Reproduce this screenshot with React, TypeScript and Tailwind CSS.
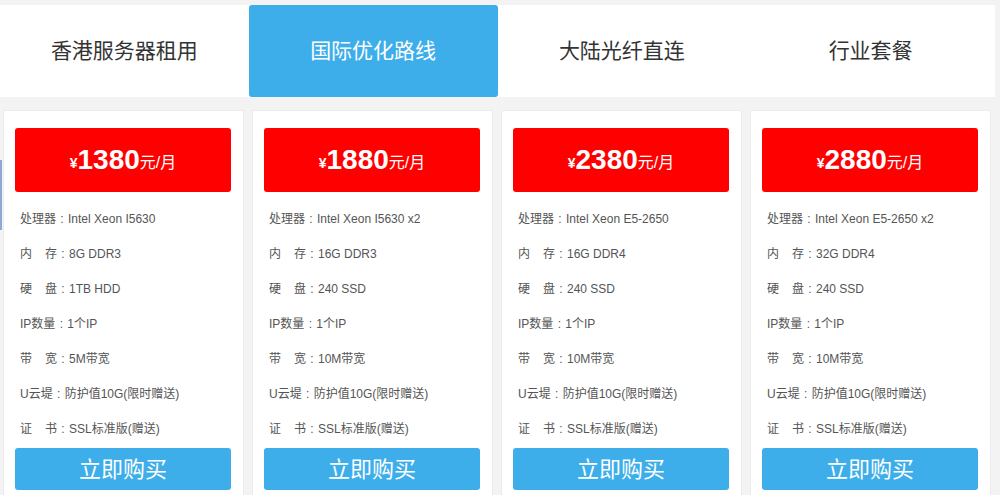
import React from "react";

const tabs = ["香港服务器租用", "国际优化路线", "大陆光纤直连", "行业套餐"];

const plans = [
  { price: "1380", cpu: "Intel Xeon I5630", mem: "8G DDR3", disk: "1TB HDD", bw: "5M带宽" },
  { price: "1880", cpu: "Intel Xeon I5630 x2", mem: "16G DDR3", disk: "240 SSD", bw: "10M带宽" },
  { price: "2380", cpu: "Intel Xeon E5-2650", mem: "16G DDR4", disk: "240 SSD", bw: "10M带宽" },
  { price: "2880", cpu: "Intel Xeon E5-2650 x2", mem: "32G DDR4", disk: "240 SSD", bw: "10M带宽" },
];

const font = { fontFamily: '"Liberation Sans", "Noto Sans CJK SC", sans-serif' };

function Row({ label, value }: { label: React.ReactNode; value: string }) {
  return (
    <div className="h-[35px] flex items-center text-[12px] text-[#555] pl-[5px] whitespace-nowrap">
      {label}
      <span className="inline-block w-[12px] text-center">:</span>
      <span>{value}</span>
    </div>
  );
}

function Two({ a, b }: { a: string; b: string }) {
  return (
    <span className="inline-flex w-[37px] justify-between">
      <span>{a}</span>
      <span>{b}</span>
    </span>
  );
}

export default function App() {
  return (
    <div className="w-[1000px] h-[495px] bg-[#f3f3f3] overflow-hidden relative" style={font}>
      <div className="absolute left-0 top-[160px] w-[2px] h-[70px] bg-[#8fa9d6]" />
      <div className="pt-[5px] pr-[5px]">
        <div className="flex bg-white h-[92px]">
          {tabs.map((t, i) => (
            <div
              key={t}
              className={
                "flex-1 flex items-center justify-center text-[21px] " +
                (i === 1 ? "bg-[#3daeea] text-white rounded-[3px]" : "text-[#333]")
              }
            >
              {t}
            </div>
          ))}
        </div>
      </div>
      <div className="flex gap-[8px] pl-[3px] pt-[13px]">
        {plans.map((p) => (
          <div key={p.price} className="w-[241px] h-[400px] bg-white border border-[#ececec] rounded-[2px] pl-[11px] pr-[12px] pt-[17px]">
            <div className="h-[64px] bg-[#ff0000] rounded-[3px] flex items-center justify-center text-white">
              <span className="text-[14px] font-bold mt-[6px]">¥</span>
              <span className="text-[28px] font-bold leading-none">{p.price}</span>
              <span className="text-[16px] mt-[6px]">元/月</span>
            </div>
            <div className="pt-[9px]">
              <Row label="处理器" value={p.cpu} />
              <Row label={<Two a="内" b="存" />} value={p.mem} />
              <Row label={<Two a="硬" b="盘" />} value={p.disk} />
              <Row label="IP数量" value="1个IP" />
              <Row label={<Two a="带" b="宽" />} value={p.bw} />
              <Row label="U云堤" value="防护值10G(限时赠送)" />
              <Row label={<Two a="证" b="书" />} value="SSL标准版(赠送)" />
            </div>
            <div className="mt-[2px] h-[42px] bg-[#3daeea] rounded-[3px] flex items-center justify-center text-white text-[22px]">
              立即购买
            </div>
          </div>
        ))}
      </div>
    </div>
  );
}
